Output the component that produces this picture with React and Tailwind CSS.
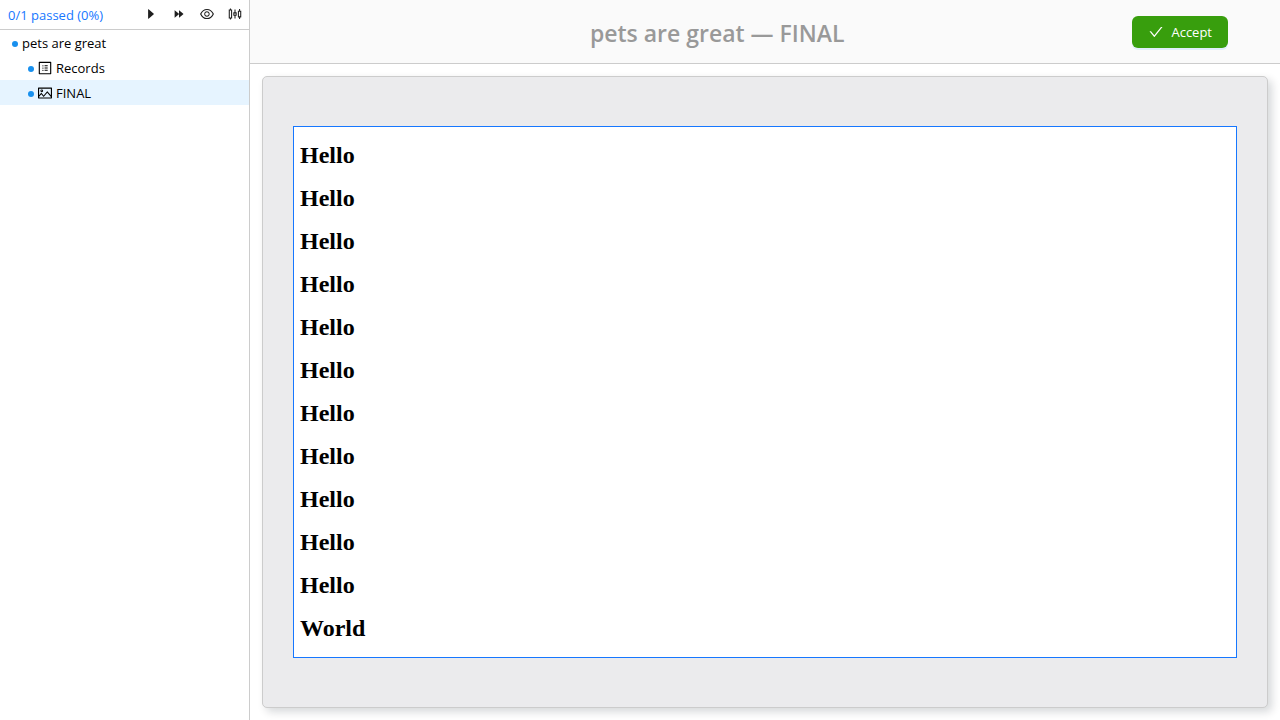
import {
  AiFillForward,
  AiOutlineCaretRight,
  AiOutlineCheck,
  AiOutlineEye,
  AiOutlinePicture,
  AiOutlineProfile,
  AiOutlineSliders,
} from 'react-icons/ai';

const actions = [
  { label: 'Run', Icon: AiOutlineCaretRight, size: 'size-3.5' },
  { label: 'Run all', Icon: AiFillForward, size: 'size-3.5' },
  { label: 'Preview', Icon: AiOutlineEye, size: 'size-4' },
  { label: 'Settings', Icon: AiOutlineSliders, size: 'size-4' },
];

const lines = [...Array(11).fill('Hello'), 'World'];

function TreeItem({ label, Icon, nested, selected }) {
  return (
    <li>
      <button
        type="button"
        aria-current={selected ? 'page' : undefined}
        className={`flex h-[25px] w-full items-center text-left ${nested ? 'gap-[3px] pl-7' : 'gap-1 pl-3'} ${selected ? 'bg-[#e6f4ff]' : ''}`}
      >
        <span className="mt-0.5 size-1.5 rounded-full bg-[#1890ee]" />
        {Icon && <Icon className="size-4" />}
        <span>{label}</span>
      </button>
    </li>
  );
}

function Sidebar() {
  return (
    <aside className="flex w-[250px] shrink-0 flex-col border-r border-[#cccccc]">
      <div className="flex h-[30px] items-center justify-between border-b border-[#cccccc] pr-1.5 pl-2">
        <span className="text-[#1677ff]">0/1 passed (0%)</span>
        <div className="flex gap-3 pb-px text-[#1f1f1f]">
          {actions.map(({ label, Icon, size }) => (
            <button key={label} type="button" aria-label={label} className="flex size-4 items-center justify-center">
              <Icon className={size} />
            </button>
          ))}
        </div>
      </div>
      <ul>
        <TreeItem label="pets are great" />
        <TreeItem label="Records" Icon={AiOutlineProfile} nested />
        <TreeItem label="FINAL" Icon={AiOutlinePicture} nested selected />
      </ul>
    </aside>
  );
}

export default function App() {
  return (
    <div className="flex min-h-screen bg-white font-['Open_Sans',sans-serif] text-[13px] leading-5 text-black">
      <Sidebar />
      <main className="flex min-w-0 flex-1 flex-col">
        <header className="flex h-16 items-center border-b border-[#cccccc] bg-[#fafafa] px-[52px]">
          <h1 className="flex-1 pt-0.5 text-center text-[23px] leading-8 font-semibold text-[#999999]">
            pets are great — FINAL
          </h1>
          <button
            type="button"
            className="flex h-8 items-center gap-[7px] rounded-md bg-[#389e0d] px-4 text-white shadow-[0_2px_0_rgba(5,145,255,0.1)]"
          >
            <AiOutlineCheck className="size-4" />
            Accept
          </button>
        </header>
        <div className="flex flex-1 flex-col p-3">
          <section className="flex-1 rounded-[5px] border border-[#cccccc] bg-[#ebebed] px-[30px] py-[49px] shadow-[4px_4px_8px_rgba(0,21,31,0.16)]">
            <div className="flex flex-col gap-4 border border-[#1677ff] bg-white px-1.5 py-[15px] font-['Liberation_Serif',serif] text-2xl font-bold text-black">
              {lines.map((line, index) => (
                <h2 key={index} className="leading-[27px]">{line}</h2>
              ))}
            </div>
          </section>
        </div>
      </main>
    </div>
  );
}
